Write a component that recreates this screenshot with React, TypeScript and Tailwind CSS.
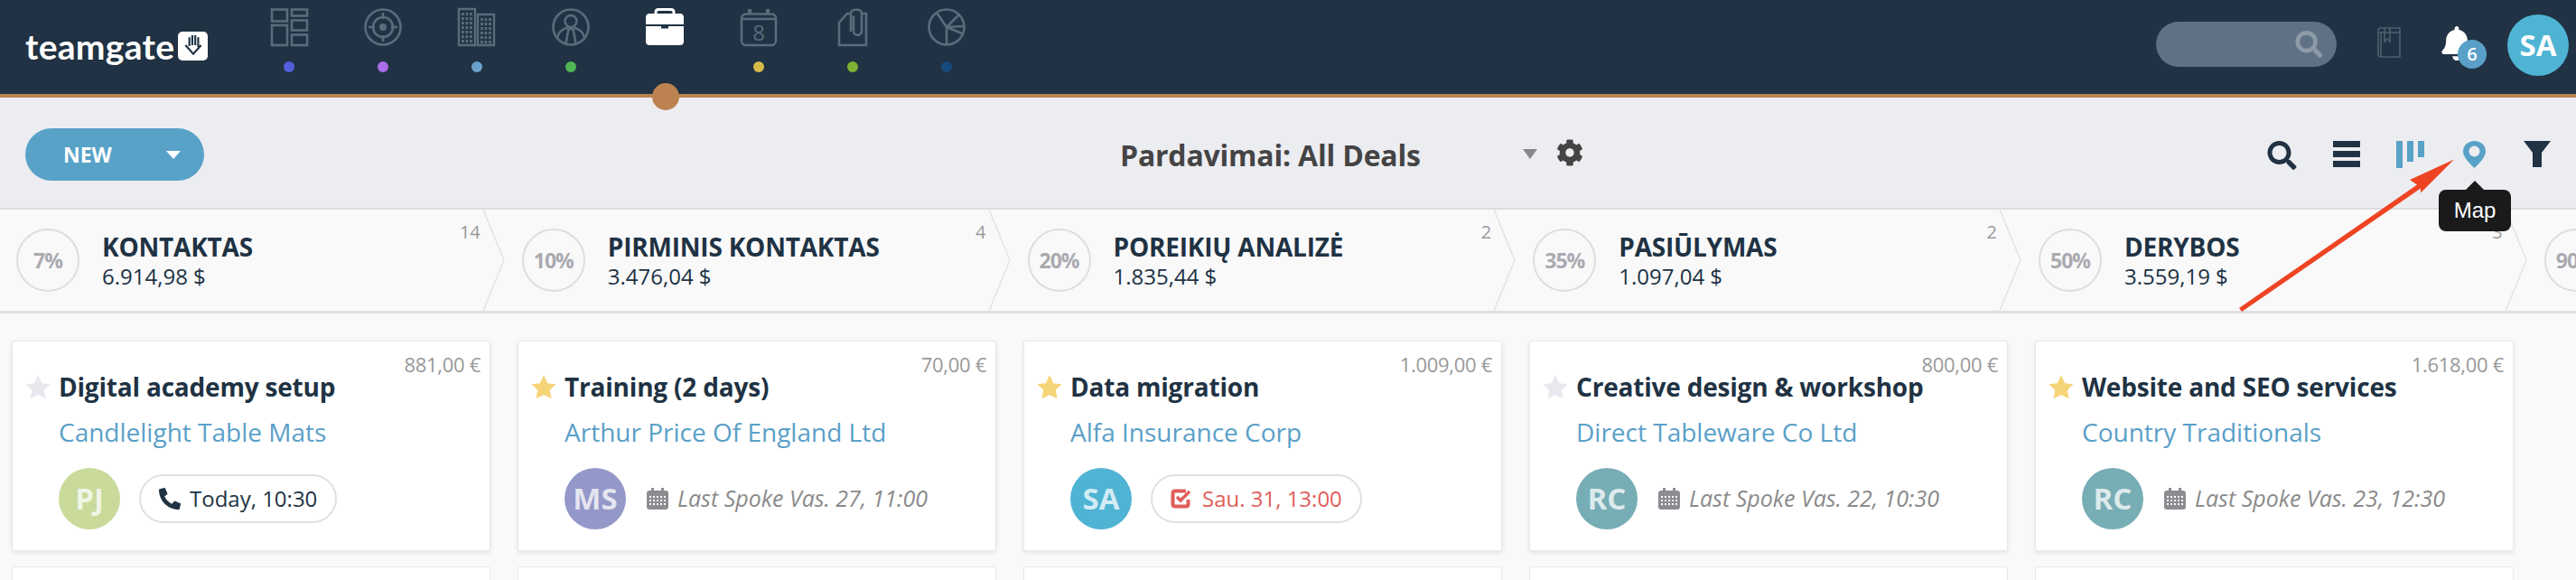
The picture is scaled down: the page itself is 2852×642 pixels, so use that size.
import { FaBell, FaCog, FaPhoneAlt, FaSearch } from "react-icons/fa";

const stages = [
    { pct: "7%", name: "KONTAKTAS", value: "6.914,98 $", count: "14" },
    { pct: "10%", name: "PIRMINIS KONTAKTAS", value: "3.476,04 $", count: "4" },
    { pct: "20%", name: "POREIKIŲ ANALIZĖ", value: "1.835,44 $", count: "2" },
    { pct: "35%", name: "PASIŪLYMAS", value: "1.097,04 $", count: "2" },
    { pct: "50%", name: "DERYBOS", value: "3.559,19 $", count: "3" },
    { pct: "90%", name: "", value: "", count: "" },
];

const deals = [
    { price: "881,00 €", title: "Digital academy setup", company: "Candlelight Table Mats", star: false, initials: "PJ", avatar: "bg-[#c9da9b]", kind: "call", when: "Today, 10:30" },
    { price: "70,00 €", title: "Training (2 days)", company: "Arthur Price Of England Ltd", star: true, initials: "MS", avatar: "bg-[#9498c8]", kind: "last", when: "Last Spoke Vas. 27, 11:00" },
    { price: "1.009,00 €", title: "Data migration", company: "Alfa Insurance Corp", star: true, initials: "SA", avatar: "bg-[#4fb3d4]", kind: "task", when: "Sau. 31, 13:00" },
    { price: "800,00 €", title: "Creative design & workshop", company: "Direct Tableware Co Ltd", star: false, initials: "RC", avatar: "bg-[#77adb4]", kind: "last", when: "Last Spoke Vas. 22, 10:30" },
    { price: "1.618,00 €", title: "Website and SEO services", company: "Country Traditionals", star: true, initials: "RC", avatar: "bg-[#77adb4]", kind: "last", when: "Last Spoke Vas. 23, 12:30" },
];

function DashIcon() {
    return (
        <g fill="none" stroke="#5a6b7c" strokeWidth="2.6">
            <rect x="3" y="2.5" width="17" height="13" />
            <rect x="3" y="20" width="17" height="22" />
            <rect x="25" y="2.5" width="17" height="7" />
            <rect x="25" y="14.5" width="17" height="11" />
            <rect x="25" y="30.5" width="17" height="11.5" />
        </g>
    );
}

function TargetIcon() {
    return (
        <g fill="none" stroke="#5a6b7c" strokeWidth="2.6">
            <circle cx="22" cy="22" r="19.5" />
            <circle cx="22" cy="22" r="11" />
            <circle cx="22" cy="22" r="4" fill="#5a6b7c" stroke="none" />
            <path d="M22 6v7M22 31v7M6 22h7M31 22h7" />
        </g>
    );
}

function BuildingsIcon() {
    const rows = [0, 1, 2, 3, 4, 5, 6];
    const cols = [0, 1, 2];
    return (
        <g>
            <path d="M2 2h18v40H2zM23 8h18v34H23z" fill="none" stroke="#5a6b7c" strokeWidth="2.4" />
            {rows.map((r) =>
                cols.map((c) => (
                    <rect key={`a${r}${c}`} x={5 + c * 4.5} y={6 + r * 5} width="2.8" height="3.2" fill="#5a6b7c" />
                )),
            )}
            {rows.slice(0, 6).map((r) =>
                cols.map((c) => (
                    <rect key={`b${r}${c}`} x={26 + c * 4.5} y={12 + r * 5} width="2.8" height="3.2" fill="#5a6b7c" />
                )),
            )}
        </g>
    );
}

function PersonIcon() {
    return (
        <g fill="none" stroke="#5a6b7c" strokeWidth="2.6">
            <circle cx="22" cy="22" r="19.5" />
            <circle cx="22" cy="15.5" r="6.5" />
            <path d="M7 34c1-6 6-10 12-11.5M37 34c-1-6-6-10-12-11.5M19.5 24l-3 16M24.5 24l3 16M19.5 24h5" />
        </g>
    );
}

function CaseIcon() {
    return (
        <g>
            <path d="M12 7.5V5.5c0-1.6 1-3 3-3h14c2 0 3 1.400 3 3v2" fill="none" stroke="#fff" strokeWidth="3" />
            <path d="M5 7h34c2.500 0 4 1.800 4 4v8H1v-8c0-2.200 1.500-4 4-4zM1 21h17v2.500h8V21h17v17c0 2.500-1.500 4-4 4H5c-2.500 0-4-1.500-4-4z" fill="#fff" />
        </g>
    );
}

function CalendarIcon() {
    return (
        <g fill="none" stroke="#5a6b7c" strokeWidth="2.6">
            <rect x="3" y="7.500" width="38" height="34.500" rx="5" />
            <path d="M3 13h38" />
            <path d="M12 2v5M32 2v5" strokeWidth="4" />
            <text x="22" y="37" textAnchor="middle" fontSize="24" fontFamily="'Open Sans', sans-serif" fill="#5a6b7c" stroke="none">8</text>
        </g>
    );
}

function ClipIcon() {
    return (
        <g fill="none" stroke="#5a6b7c" strokeWidth="2.6">
            <path d="M20 7h-4L7 17v25h30V7h-5" />
            <path d="M20 27V6.500c0-5 12-5 12 0V26c0 6.500-9 6.500-9 0V9.500" />
        </g>
    );
}

function PieIcon() {
    return (
        <g fill="none" stroke="#5a6b7c" strokeWidth="2.6">
            <circle cx="22" cy="22" r="19.5" />
            <path d="M22 41.500V22L11 6M22 22l14-14M22 22l19-1M22 22l17 7" />
        </g>
    );
}

const navItems = [
    { icon: <DashIcon />, dot: "bg-[#5160de]" },
    { icon: <TargetIcon />, dot: "bg-[#a96de8]" },
    { icon: <BuildingsIcon />, dot: "bg-[#6ba0cd]" },
    { icon: <PersonIcon />, dot: "bg-[#4fb656]" },
    { icon: <CaseIcon />, dot: "" },
    { icon: <CalendarIcon />, dot: "bg-[#d6bb48]" },
    { icon: <ClipIcon />, dot: "bg-[#7fb034]" },
    { icon: <PieIcon />, dot: "bg-[#174a7c]" },
];

function Star({ on }: { on: boolean }) {
    return (
        <svg viewBox="0 0 28 27" className={`w-[28px] h-[27px] shrink-0 ${on ? "fill-[#f6d579]" : "fill-[#e8e8ee]"}`}>
            <path d="M14 0l4.200 9.200 9.300 1.100-6.700 6.400 1.700 9.500-8.500-4.200-8.500 4.200 1.700-9.500L.5 10.300l9.300-1.100z" />
        </svg>
    );
}

function DealCard({ deal }: { deal: (typeof deals)[number] }) {
    return (
        <div className="w-[530px] h-[233px] shrink-0 bg-white border border-[#e8e8ec] rounded-[2px] shadow-[0_2px_5px_rgba(40,40,70,0.1)] pt-[12px] pl-[14px] pr-[10px]">
            <div className="h-[26px] text-right text-[22px] leading-[26px] text-[#999] tracking-[-0.3px]">{deal.price}</div>
            <div className="flex items-center h-[28px] mt-[-2px]">
                <Star on={deal.star} />
                <span className="ml-[9px] text-[28px] leading-[28px] font-bold tracking-[-0.2px] text-[#203243] whitespace-nowrap">{deal.title}</span>
            </div>
            <div className="pl-[37px] mt-[19px] h-[34px] text-[28px] leading-[34px] text-[#5aa0c8] whitespace-nowrap">{deal.company}</div>
            <div className="pl-[37px] mt-[23px] flex items-center">
                <div className={`w-[68px] h-[68px] rounded-full shrink-0 flex items-center justify-center text-[33px] font-bold text-white/75 ${deal.avatar}`}>{deal.initials}</div>
                {deal.kind === "call" && (
                    <div className="ml-[21px] h-[54px] px-[20px] flex items-center rounded-full border-2 border-[#e0e0e0] text-[24px] text-[#203243] whitespace-nowrap">
                        <FaPhoneAlt className="w-[24px] h-[24px] text-[#203243] mr-[10px]" />
                        {deal.when}
                    </div>
                )}
                {deal.kind === "task" && (
                    <div className="ml-[21px] h-[54px] px-[20px] flex items-center rounded-full border-2 border-[#e0e0e0] text-[24px] text-[#e05d5a] whitespace-nowrap">
                        <svg viewBox="0 0 24 22" className="w-[24px] h-[22px] mr-[11px] shrink-0">
                            <path d="M17 2.500H5c-1.500 0-2.500 1-2.500 2.500v12c0 1.500 1 2.500 2.500 2.500h12c1.500 0 2.500-1 2.500-2.500v-5" fill="none" stroke="#e05d5a" strokeWidth="4" />
                            <path d="M7 9l4 4 10-10" fill="none" stroke="#e05d5a" strokeWidth="3.500" />
                        </svg>
                        {deal.when}
                    </div>
                )}
                {deal.kind === "last" && (
                    <div className="ml-[23px] flex items-center text-[25px] italic text-[#8a8a8a] whitespace-nowrap">
                        <svg viewBox="0 0 24 24" className="w-[24px] h-[24px] mr-[10px] shrink-0 fill-[#8c8c92]">
                            <path d="M5 0h3v3h8V0h3v3h2c1.800 0 3 1.200 3 3v15c0 1.800-1.200 3-3 3H3c-1.800 0-3-1.200-3-3V6c0-1.800 1.200-3 3-3h2z" />
                            {[9, 13, 17].map((y) =>
                                [4, 8, 12, 16, 20].map((x) => <rect key={`${x}${y}`} x={x - 1} y={y} width="2" height="2" fill="#fff" />),
                            )}
                        </svg>
                        {deal.when}
                    </div>
                )}
            </div>
        </div>
    );
}

export default function App() {
    return (
        <div className="relative w-[2852px] h-[642px] overflow-hidden bg-[#f9f9fa] [font-family:'Open_Sans',sans-serif]">
            <header className="h-[108px] bg-[#203243] border-b-4 border-[#bc8250] flex items-start relative">
                <div className="w-[268px] shrink-0 pl-[28px] pt-[29px] flex items-center">
                    <span className="text-[39px] leading-[44px] font-bold text-white [font-family:'Lato',sans-serif] tracking-[0.3px]">teamgate</span>
                    <div className="ml-[4px] w-[33px] h-[32px] rounded-[5px] bg-white flex items-center justify-center">
                        <svg viewBox="0 0 24 24" className="w-[26px] h-[26px]" fill="none" stroke="#203243" strokeWidth="2">
                            <path d="M8 3v9M11 1v10M14 1v10M17 3v10M4 11l8 9 8-9" />
                        </svg>
                    </div>
                </div>
                {navItems.map((item, i) => (
                    <div key={i} className="w-[104px] shrink-0 flex flex-col items-center pt-[8px]">
                        <svg viewBox="0 0 44 44" className="w-[44px] h-[44px]">{item.icon}</svg>
                        {item.dot && <div className={`w-[12px] h-[12px] rounded-full mt-[16px] ${item.dot}`} />}
                    </div>
                ))}
                <div className="ml-auto pr-[8px] pt-[16px] flex items-start">
                    <div className="mt-[8px] w-[200px] h-[50px] rounded-full bg-[#5f7185] flex items-center justify-end pr-[15px]">
                        <FaSearch className="w-[31px] h-[30px] text-[#8d9aa8]" />
                    </div>
                    <svg viewBox="0 0 26 34" className="ml-[45px] mt-[14px] w-[26px] h-[34px]" fill="none" stroke="#4e5f70" strokeWidth="1.600">
                        <path d="M25 1H4C2 1 1 2.500 1 4v26c0 2 1 3 3 3h21zM1 6h24M8 1v15l3-3 3 3V1M4 6v27" />
                    </svg>
                    <div className="relative ml-[44px] mt-[13px] w-[40px] h-[38px]">
                        <FaBell className="w-[36px] h-[38px] text-white" />
                        <div className="absolute left-[19px] top-[15px] w-[32px] h-[32px] rounded-full bg-[#5aa0c8] flex items-center justify-center text-[20px] font-semibold text-white">6</div>
                    </div>
                    <div className="ml-[34px] w-[68px] h-[68px] rounded-full bg-[#4fb3d4] flex items-center justify-center text-[33px] font-bold text-white">SA</div>
                </div>
                <div className="absolute left-[722px] top-[92px] w-[30px] h-[30px] rounded-full bg-[#bc8250]" />
            </header>

            <div className="h-[122px] bg-[#ecedf1] flex items-center pl-[28px] pr-[28px]">
                <button className="w-[198px] h-[58px] mt-[4px] rounded-[29px] bg-[#58a2c8] flex items-center pl-[42px] text-white text-[23px] font-bold">
                    NEW
                    <span className="ml-[60px] w-0 h-0 border-x-[8px] border-x-transparent border-t-[9px] border-t-white" />
                </button>
                <div className="ml-[1014px] mt-[6px] w-[446px] text-[32px] font-bold tracking-[-0.2px] text-[#444] whitespace-nowrap">Pardavimai: All Deals</div>
                <span className="mt-[3px] w-0 h-0 border-x-[8px] border-x-transparent border-t-[11px] border-t-[#888]" />
                <FaCog className="ml-[21px] w-[30px] h-[30px] text-[#444]" />
                <div className="ml-auto flex items-start mt-[6px]">
                    <FaSearch className="w-[33px] h-[32px] text-[#203243]" />
                    <div className="ml-[40px] w-[30px] flex flex-col gap-[4px]">
                        <div className="h-[7px] bg-[#203243]" />
                        <div className="h-[7px] bg-[#203243]" />
                        <div className="h-[7px] bg-[#203243]" />
                    </div>
                    <div className="ml-[40px] flex items-start gap-[5px]">
                        <div className="w-[7px] h-[30px] bg-[#58a2c8]" />
                        <div className="w-[7px] h-[23px] bg-[#58a2c8]" />
                        <div className="w-[7px] h-[18px] bg-[#58a2c8]" />
                    </div>
                    <svg viewBox="0 0 25 30" className="ml-[43px] w-[25px] h-[30px]">
                        <path fillRule="evenodd" fill="#58a2c8" d="M12.500 0C19.500 0 25 5 25 11.500c0 6.500-7 13-12.500 18.500C7 24.500 0 18 0 11.500 0 5 5.500 0 12.500 0zm0 5.500a6 6 0 1 0 0 12 6 6 0 0 0 0-12z" />
                    </svg>
                    <svg viewBox="0 0 30 29" className="ml-[42px] w-[30px] h-[29px]">
                        <path fill="#203243" d="M0 0h30L20 13v16H10V13z" />
                    </svg>
                </div>
            </div>

            <div className="h-[117px] flex border-y-[2px] border-t-[#dcdce2] border-b-[3px] border-b-[#dfdfe5] bg-[#f9f9fa]">
                {stages.map((s, i) => (
                    <div key={i} className="relative w-[559.75px] h-[112px] shrink-0 flex items-center pl-[18px]">
                        <div className="w-[70px] h-[70px] rounded-full border-2 border-[#dedee0] shrink-0 flex items-center justify-center text-[23px] font-bold text-[#aaaab0] tracking-[-1px]">{s.pct}</div>
                        <div className="ml-[25px] mt-[2px]">
                            <div className="text-[28px] leading-[34px] font-bold tracking-[-0.2px] text-[#203243] whitespace-nowrap">{s.name}</div>
                            <div className="text-[24px] leading-[32px] text-[#203243] whitespace-nowrap">{s.value}</div>
                        </div>
                        <div className="absolute right-[28px] top-[12px] text-[20px] leading-[26px] text-[#999]">{s.count}</div>
                        <svg viewBox="0 0 26 112" className="absolute right-0 top-0 w-[26px] h-[112px]" fill="none" stroke="#e3e3e8" strokeWidth="1.500">
                            <path d="M1 0l23 56-23 56" />
                        </svg>
                    </div>
                ))}
            </div>

            <div className="flex gap-[30px] pl-[13px] pt-[30px]">
                {deals.map((d) => (
                    <div key={d.title} className="flex flex-col gap-[17px]">
                        <DealCard deal={d} />
                        <div className="w-[530px] h-[60px] bg-white border border-[#e8e8ec] rounded-[2px]" />
                    </div>
                ))}
            </div>

            <svg viewBox="0 0 2852 642" className="absolute left-0 top-0 w-[2852px] h-[642px] pointer-events-none">
                <path fill="#ee4423" d="M2717 176.500L2668 199l8 5.500L2479 341l3 4 198-136.500 0 5z" />
            </svg>

            <div className="absolute left-[2700px] top-[210px] w-[80px] h-[46px] rounded-[8px] bg-[#1a1a1a] flex items-center justify-center text-white text-[24px] [font-family:'Liberation_Sans',sans-serif]">
                Map
                <span className="absolute left-[30px] top-[-10px] w-0 h-0 border-x-[10px] border-x-transparent border-b-[10px] border-b-[#1a1a1a]" />
            </div>
        </div>
    );
}
